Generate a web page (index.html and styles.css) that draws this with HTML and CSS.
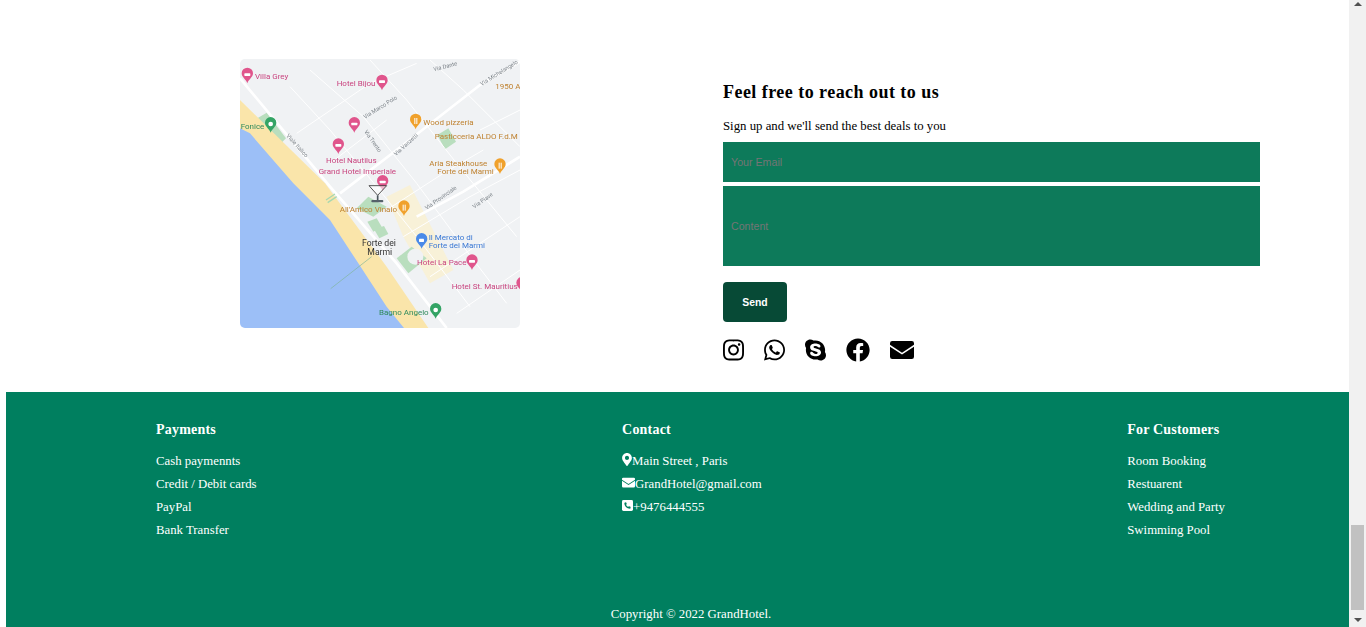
FILE: index.html
```html
<!DOCTYPE html>
<html lang="en">
<head>
    <meta charset="UTF-8">
    <meta name="viewport" content="width=device-width, initial-scale=1.0">
    <title>Grand Hotel</title>
    <link rel="stylesheet" href="styles.css">
</head>
<body>
    <div class="page">
        <section class="contact">
            <div class="map-col">
                <div class="map">
                    <svg class="map-svg" viewBox="30 27 840 807" width="280" height="269">
                        <defs>
                            <path id="pin" d="M0 24C-4 12-17 6-17-6A17 17 0 1 1 17-6C17 6 4 12 0 24Z"/>
                        </defs>
                        <rect x="30" y="27" width="840" height="807" fill="#f0f2f4"/>

                        <!-- town blocks -->
                        <path d="M470 440L540 405L670 660L600 700L520 560Z" fill="#f8f1d8"/>
                        <path d="M82 205L110 188L168 265L145 288Z" fill="#b9debe"/>
                        <path d="M622 255L655 235L678 275L645 298Z" fill="#b9debe"/>
                        <path d="M380 475L415 440L470 470L430 500Z" fill="#b9debe"/>
                        <path d="M412 515L440 505L455 530L430 545Z" fill="#b9debe"/>
                        <path d="M432 538L462 528L475 552L448 565Z" fill="#b9debe"/>
                        <path d="M500 625L545 590L590 625L535 670Z" fill="#b9debe"/>
                        <circle cx="556" cy="620" r="24" fill="#f0f2f4"/>

                        <!-- roads -->
                        <g class="roads-small">
                            <path d="M180 110L300 240L440 410L560 560L720 770"/>
                            <path d="M240 60L400 200L560 400L700 590L830 760"/>
                            <path d="M420 30L530 150L680 340L860 560"/>
                            <path d="M600 30L700 120L870 290"/>
                            <path d="M200 250L420 100L560 40"/>
                            <path d="M300 340L470 210"/>
                            <path d="M470 480L640 370L760 300"/>
                            <path d="M520 560L720 440L870 360"/>
                            <path d="M600 680L780 560L870 500"/>
                            <path d="M680 790L870 660"/>
                            <path d="M750 240L870 180"/>
                        </g>
                        <g class="roads-main">
                            <path d="M30 85L300 410L500 640L650 834"/>
                            <path d="M330 430L500 300L750 105L870 35"/>
                            <path d="M560 500L700 425L870 320"/>
                        </g>

                        <!-- beach and sea -->
                        <path d="M30 150L285 400L470 650L595 834H30Z" fill="#fae5aa"/>
                        <path d="M30 235L60 250L190 400L300 510L385 640L470 770L522 834H30Z" fill="#9cbff7"/>
                        <path d="M302 716L425 620" stroke="#7fb59a" stroke-width="2" fill="none"/>
                        <path d="M288 450L315 432M293 458L320 440" stroke="#a8d8b0" stroke-width="4"/>

                        <!-- pins -->
                        <g fill="#e0558c">
                            <use href="#pin" x="52" y="76"/>
                            <use href="#pin" x="456" y="97"/>
                            <use href="#pin" x="373" y="224"/>
                            <use href="#pin" x="325" y="288"/>
                            <use href="#pin" x="458" y="398"/>
                            <use href="#pin" x="726" y="636"/>
                            <use href="#pin" x="876" y="704"/>
                        </g>
                        <g fill="#f0a12c">
                            <use href="#pin" x="557" y="214"/>
                            <use href="#pin" x="810" y="348"/>
                            <use href="#pin" x="522" y="474"/>
                        </g>
                        <use href="#pin" x="122" y="224" fill="#34a465"/>
                        <use href="#pin" x="617" y="782" fill="#34a465"/>
                        <use href="#pin" x="575" y="572" fill="#4a8ae8"/>

                        <!-- pin glyphs -->
                        <g fill="#fff">
                            <rect x="43" y="70" width="18" height="8" rx="2"/>
                            <rect x="447" y="91" width="18" height="8" rx="2"/>
                            <rect x="364" y="218" width="18" height="8" rx="2"/>
                            <rect x="316" y="282" width="18" height="8" rx="2"/>
                            <rect x="449" y="392" width="18" height="8" rx="2"/>
                            <rect x="717" y="630" width="18" height="8" rx="2"/>
                            <rect x="553" y="204" width="3" height="18"/>
                            <rect x="559" y="204" width="3" height="18"/>
                            <rect x="806" y="338" width="3" height="18"/>
                            <rect x="812" y="338" width="3" height="18"/>
                            <rect x="518" y="464" width="3" height="18"/>
                            <rect x="524" y="464" width="3" height="18"/>
                            <circle cx="122" cy="222" r="7"/>
                            <circle cx="617" cy="780" r="7"/>
                            <rect x="567" y="566" width="15" height="10" rx="2"/>
                        </g>

                        <!-- labels -->
                        <g class="lbl-pink">
                            <text x="75" y="88">Villa Grey</text>
                            <text x="320" y="108">Hotel Bijou</text>
                            <text x="288" y="340">Hotel Nautilus</text>
                            <text x="266" y="372">Grand Hotel Imperiale</text>
                            <text x="561" y="646">Hotel La Pace</text>
                            <text x="665" y="717">Hotel St. Mauritius</text>
                        </g>
                        <g class="lbl-orange">
                            <text x="796" y="117">1950 A</text>
                            <text x="580" y="226">Wood pizzeria</text>
                            <text x="614" y="268">Pasticceria ALDO F.d.M</text>
                            <text x="598" y="348">Aria Steakhouse</text>
                            <text x="622" y="372">Forte dei Marmi</text>
                            <text x="329" y="486">All'Antico Vinaio</text>
                        </g>
                        <g class="lbl-blue">
                            <text x="596" y="571">Il Mercato di</text>
                            <text x="596" y="595">Forte dei Marmi</text>
                        </g>
                        <g class="lbl-green">
                            <text x="32" y="236">Fonice</text>
                            <text x="447" y="796">Bagno Angelo</text>
                        </g>
                        <g class="lbl-town">
                            <text x="396" y="588">Forte dei</text>
                            <text x="412" y="614">Marmi</text>
                        </g>
                        <g class="lbl-road">
                            <text transform="translate(168 258) rotate(48)">Viale Italico</text>
                            <text transform="translate(405 207) rotate(-32)">Via Marco Polo</text>
                            <text transform="translate(402 245) rotate(55)">Via Trento</text>
                            <text transform="translate(498 318) rotate(-42)">Via Vanzetti</text>
                            <text transform="translate(590 480) rotate(-35)">Via Provinciale</text>
                            <text transform="translate(733 476) rotate(-35)">Via Piave</text>
                            <text transform="translate(755 108) rotate(-32)">Via Michelangelo</text>
                            <text transform="translate(612 64) rotate(-15)">Via Dante</text>
                        </g>

                        <!-- cocktail marker -->
                        <g class="marker">
                            <path class="marker-glass" d="M417 407L443 436L470 407Z"/>
                            <path class="marker-stem" d="M443 436V452"/>
                            <rect x="424" y="450" width="36" height="7" rx="3" fill="#56626a"/>
                        </g>
                    </svg>
                </div>
            </div>

            <div class="form-col">
                <h2 class="form-title">Feel free to reach out to us</h2>
                <p class="form-sub">Sign up and we'll send the best deals to you</p>
                <form class="contact-form">
                    <input class="field" type="text" placeholder="Your Email">
                    <input class="field field-big" type="text" placeholder="Content">
                    <button class="send-btn" type="button">Send</button>
                </form>
                <div class="socials">
                    <svg class="social" viewBox="0 0 448 512" width="21" height="24"><path d="M224.1 141c-63.6 0-114.9 51.3-114.9 114.9s51.3 114.9 114.9 114.9S339 319.5 339 255.9 287.7 141 224.1 141zm0 189.6c-41.1 0-74.7-33.5-74.7-74.7s33.5-74.7 74.7-74.7 74.7 33.5 74.7 74.7-33.6 74.7-74.7 74.7zm146.4-194.3c0 14.9-12 26.8-26.8 26.8-14.9 0-26.8-12-26.8-26.8s12-26.8 26.8-26.8 26.8 12 26.8 26.8zm76.1 27.2c-1.7-35.9-9.9-67.7-36.2-93.9-26.2-26.2-58-34.4-93.9-36.2-37-2.1-147.9-2.1-184.9 0-35.8 1.7-67.6 9.9-93.9 36.1s-34.4 58-36.2 93.9c-2.1 37-2.1 147.9 0 184.9 1.7 35.9 9.9 67.7 36.2 93.9s58 34.4 93.9 36.2c37 2.1 147.9 2.1 184.9 0 35.9-1.7 67.7-9.9 93.9-36.2 26.2-26.2 34.4-58 36.2-93.9 2.1-37 2.1-147.8 0-184.8zM398.8 388c-7.8 19.6-22.9 34.7-42.6 42.6-29.5 11.7-99.5 9-132.1 9s-102.7 2.6-132.1-9c-19.6-7.8-34.7-22.9-42.6-42.6-11.7-29.5-9-99.5-9-132.1s-2.6-102.7 9-132.1c7.8-19.6 22.9-34.7 42.6-42.6 29.5-11.7 99.5-9 132.1-9s102.7-2.6 132.1 9c19.6 7.8 34.7 22.9 42.6 42.6 11.7 29.5 9 99.5 9 132.1s2.7 102.7-9 132.1z"/></svg>
                    <svg class="social" viewBox="0 0 448 512" width="21" height="24"><path d="M380.9 97.1C339 55.1 283.2 32 223.9 32c-122.4 0-222 99.6-222 222 0 39.1 10.2 77.3 29.6 111L0 480l117.7-30.9c32.4 17.7 68.9 27 106.1 27h.1c122.3 0 224.1-99.6 224.1-222 0-59.3-25.2-115-67.1-157zm-157 341.6c-33.2 0-65.7-8.9-94-25.7l-6.7-4-69.8 18.3L72 359.2l-4.4-7c-18.5-29.4-28.2-63.3-28.2-98.2 0-101.7 82.8-184.5 184.6-184.5 49.3 0 95.6 19.2 130.4 54.1 34.8 34.9 56.2 81.2 56.1 130.5 0 101.8-84.9 184.6-186.6 184.6zm101.2-138.2c-5.5-2.8-32.8-16.2-37.9-18-5.1-1.9-8.8-2.8-12.5 2.8-3.7 5.6-14.3 18-17.6 21.8-3.2 3.7-6.5 4.2-12 1.4-32.6-16.3-54-29.1-75.5-66-5.7-9.8 5.7-9.1 16.3-30.3 1.8-3.7.9-6.9-.5-9.7-1.4-2.8-12.5-30.1-17.1-41.2-4.5-10.8-9.1-9.3-12.5-9.5-3.2-.2-6.9-.2-10.6-.2-3.7 0-9.7 1.4-14.8 6.9-5.1 5.6-19.4 19-19.4 46.3 0 27.3 19.9 53.7 22.6 57.4 2.8 3.7 39.1 59.7 94.8 83.8 35.2 15.2 49 16.5 66.6 13.9 10.7-1.6 32.8-13.4 37.4-26.4 4.6-13 4.6-24.1 3.2-26.4-1.3-2.5-5-3.9-10.5-6.6z"/></svg>
                    <svg class="social" viewBox="0 0 448 512" width="21" height="24"><path d="M424.7 299.8c2.9-14 4.7-28.9 4.7-43.8 0-113.5-91.9-205.3-205.3-205.3-14.9 0-29.7 1.7-43.8 4.7C161.3 40.7 137.7 32 112 32 50.2 32 0 82.2 0 144c0 25.7 8.7 49.3 23.3 68.2-2.9 14-4.7 28.9-4.7 43.8 0 113.5 91.9 205.3 205.3 205.3 14.9 0 29.7-1.7 43.8-4.7 19 14.6 42.6 23.3 68.2 23.3 61.8 0 112-50.2 112-112 .1-25.6-8.6-49.2-23.2-68.1zm-194.6 91.5c-65.6 0-120.5-29.2-120.5-65 0-16 9-30.6 29.5-30.6 31.2 0 34.1 44.9 88.1 44.9 25.7 0 42.3-11.4 42.3-26.3 0-18.7-16-21.6-42-28-62.5-15.4-117.8-22-117.8-87.2 0-59.2 58.6-81.1 109.1-81.1 55.1 0 110.8 21.9 110.8 55.4 0 16.9-11.4 31.8-30.3 31.8-28.3 0-29.2-33.5-75-33.5-25.7 0-42 7-42 22.5 0 19.8 20.8 21.8 69.1 33 41.4 9.3 90.7 26.8 90.7 77.6 0 59.1-57.1 86.5-112 86.5z"/></svg>
                    <svg class="social" viewBox="0 0 512 512" width="24" height="24"><path d="M504 256C504 119 393 8 256 8S8 119 8 256c0 123.78 90.69 226.38 209.25 245V327.69h-63V256h63v-54.64c0-62.15 37-96.48 93.67-96.48 27.14 0 55.52 4.84 55.52 4.84v61h-31.28c-30.8 0-40.41 19.12-40.41 38.73V256h68.78l-11 71.69h-57.78V501C413.31 482.38 504 379.78 504 256z"/></svg>
                    <svg class="social" viewBox="0 0 512 512" width="24" height="24"><path d="M48 64H464a48 48 0 0 1 48 48v34L256 312 0 146v-34a48 48 0 0 1 48-48zM0 184L256 350 512 184V400a48 48 0 0 1-48 48H48a48 48 0 0 1-48-48z"/></svg>
                </div>
            </div>
        </section>

        <footer class="footer">
            <div class="footer-cols">
                <div class="footer-col">
                    <h4 class="footer-head">Payments</h4>
                    <p class="footer-row">Cash paymennts</p>
                    <p class="footer-row">Credit / Debit cards</p>
                    <p class="footer-row">PayPal</p>
                    <p class="footer-row">Bank Transfer</p>
                </div>
                <div class="footer-col">
                    <h4 class="footer-head">Contact</h4>
                    <p class="footer-row">
                        <svg class="footer-icon" viewBox="0 0 384 512" width="10" height="13"><path d="M172.268 501.67C26.97 291.031 0 268.413 0 192 0 85.961 85.961 0 192 0s192 85.961 192 192c0 76.413-26.97 99.031-172.268 309.67-9.535 13.774-29.93 13.773-39.464 0zM192 272c44.183 0 80-35.817 80-80s-35.817-80-80-80-80 35.817-80 80 35.817 80 80 80z"/></svg>Main Street , Paris
                    </p>
                    <p class="footer-row">
                        <svg class="footer-icon" viewBox="0 0 512 512" width="13" height="13"><path d="M48 64H464a48 48 0 0 1 48 48v34L256 312 0 146v-34a48 48 0 0 1 48-48zM0 184L256 350 512 184V400a48 48 0 0 1-48 48H48a48 48 0 0 1-48-48z"/></svg>GrandHotel@gmail.com
                    </p>
                    <p class="footer-row">
                        <svg class="footer-icon" viewBox="0 0 448 512" width="11" height="13">
                            <rect y="32" width="448" height="448" rx="60"/>
                            <path class="phone-cut" transform="translate(96 128) scale(.5)" d="M497.39 361.8l-112-48a24 24 0 0 0-28 6.9l-49.6 60.6A370.66 370.66 0 0 1 130.6 204.11l60.6-49.6a23.94 23.94 0 0 0 6.9-28l-48-112A24.16 24.16 0 0 0 122.6.61l-104 24A24 24 0 0 0 0 48c0 256.5 207.9 464 464 464a24 24 0 0 0 23.4-18.6l24-104a24.29 24.29 0 0 0-14.01-27.6z"/>
                        </svg>+9476444555
                    </p>
                </div>
                <div class="footer-col">
                    <h4 class="footer-head">For Customers</h4>
                    <p class="footer-row">Room Booking</p>
                    <p class="footer-row">Restuarent</p>
                    <p class="footer-row">Wedding and Party</p>
                    <p class="footer-row">Swimming Pool</p>
                </div>
            </div>
            <p class="copyright">Copyright © 2022 GrandHotel.</p>
        </footer>
    </div>

    <div class="scrollbar">
        <span class="arrow-up"></span>
        <span class="thumb"></span>
        <span class="arrow-down"></span>
    </div>
</body>
</html>
```

FILE: styles.css
```css
html, body {
    height: 100%;
}

body {
    margin: 0;
    display: flex;
    height: 627px;
    overflow: hidden;
    background-color: #fff;
    color: #000;
    font-family: "Liberation Serif", "Times New Roman", serif;
    font-size: 12.8px;
}

.page {
    flex: 1;
    padding-left: 6px;
    overflow: hidden;
}

/* contact block */
.contact {
    display: flex;
    height: 392px;
    box-sizing: border-box;
    padding-top: 59px;
}

.map-col {
    width: 717px;
    padding-left: 234px;
    box-sizing: border-box;
}

.map {
    width: 280px;
    height: 269px;
    border-radius: 5px;
    overflow: hidden;
}

.map-svg {
    display: block;
    filter: blur(0.4px);
}

.roads-main path {
    fill: none;
    stroke: #fff;
    stroke-width: 8;
}

.roads-small path {
    fill: none;
    stroke: #fff;
    stroke-width: 3;
}

.map-svg text {
    font-family: Roboto, Arial, sans-serif;
    font-size: 24px;
}

.lbl-pink { fill: #c9447f; }
.lbl-orange { fill: #bf8230; }
.lbl-blue { fill: #3a78d4; }
.lbl-green { fill: #2f8a5c; }
.lbl-town { fill: #333; }
.map-svg .lbl-town text { font-size: 26px; }
.lbl-road { fill: #7b8288; }
.map-svg .lbl-road text { font-size: 17px; }

.marker-glass {
    fill: #fff;
    fill-opacity: 0.6;
    stroke: #333;
    stroke-width: 2.5;
}

.marker-stem {
    fill: none;
    stroke: #4a555c;
    stroke-width: 5;
}

.form-col {
    width: 537px;
    padding-top: 21px;
}

.form-title {
    margin: 0;
    font-size: 18px;
    line-height: 24px;
    letter-spacing: 0.46px;
}

.form-sub {
    margin: 10px 0 4px;
    font-size: 12.8px;
    line-height: 24px;
}

.contact-form {
    display: flex;
    flex-direction: column;
    align-items: flex-start;
}

.field {
    width: 100%;
    height: 40px;
    box-sizing: border-box;
    margin-bottom: 4px;
    padding: 0 8px;
    border: none;
    border-radius: 0;
    background-color: #0d7a5a;
    font-family: "Liberation Sans", Arial, sans-serif;
    font-size: 10.67px;
}

.field::placeholder {
    color: #757575;
}

.field-big {
    height: 80px;
    margin-bottom: 16px;
}

.send-btn {
    width: 64px;
    height: 40px;
    border: none;
    border-radius: 4px;
    background-color: #074a36;
    color: #fff;
    font-family: "Liberation Sans", Arial, sans-serif;
    font-size: 10.4px;
    font-weight: bold;
    cursor: pointer;
}

.socials {
    display: flex;
    gap: 20px;
    margin-top: 16px;
}

.social {
    display: block;
    fill: #000;
}

/* footer */
.footer {
    height: 235px;
    box-sizing: border-box;
    padding-top: 29px;
    background-color: #007f5f;
    color: #fff;
}

.footer-cols {
    display: flex;
    justify-content: space-between;
    height: 182px;
    padding: 0 124px 0 150px;
}

.footer-head {
    margin: 0 0 11px;
    font-size: 14px;
    line-height: 18px;
    letter-spacing: 0.2px;
}

.footer-row {
    margin: 0;
    font-size: 12.8px;
    line-height: 23px;
}

.footer-icon {
    fill: #fff;
    vertical-align: -1px;
}

.phone-cut {
    fill: #007f5f;
}

.copyright {
    margin: 0;
    padding-left: 27px;
    font-size: 12.8px;
    line-height: 23px;
    text-align: center;
}

/* window scrollbar */
.scrollbar {
    position: relative;
    width: 17px;
    background-color: #f1f1f1;
}

.thumb {
    position: absolute;
    left: 2px;
    top: 525px;
    width: 13px;
    height: 85px;
    background-color: #c1c1c1;
}

.arrow-up,
.arrow-down {
    position: absolute;
    left: 5px;
    width: 0;
    height: 0;
    border-left: 4px solid transparent;
    border-right: 4px solid transparent;
}

.arrow-up {
    top: 2px;
    border-bottom: 4px solid #505050;
}

.arrow-down {
    bottom: 5px;
    border-top: 4px solid #505050;
}
```
